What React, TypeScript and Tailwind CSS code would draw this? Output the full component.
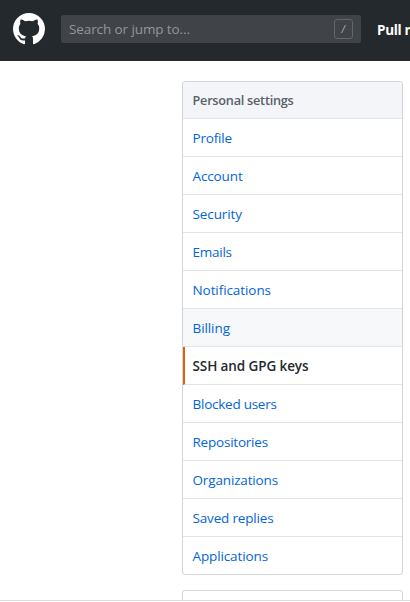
const items = [
  { label: 'Profile', tracking: 'tracking-[-0.2px]' },
  { label: 'Account', tracking: 'tracking-[-0.12px]' },
  { label: 'Security', tracking: 'tracking-[-0.1px]' },
  { label: 'Emails', tracking: 'tracking-[-0.25px]' },
  { label: 'Notifications', tracking: 'tracking-[-0.08px]' },
  { label: 'Billing', tracking: 'tracking-[-0.08px]' },
  { label: 'SSH and GPG keys', tracking: 'tracking-[-0.1px]' },
  { label: 'Blocked users', tracking: 'tracking-[-0.25px]' },
  { label: 'Repositories', tracking: 'tracking-[-0.22px]' },
  { label: 'Organizations', tracking: 'tracking-[-0.15px]' },
  { label: 'Saved replies', tracking: 'tracking-[-0.17px]' },
  { label: 'Applications', tracking: 'tracking-[-0.12px]' },
];

function rowStyle(label: string) {
  if (label === 'SSH and GPG keys') return 'border-l-2 border-l-[#e36209] pl-[7.5px] font-semibold text-[#24292e]';
  if (label === 'Billing') return 'bg-[#f6f8fa] pl-[9.5px] text-[#0366d6]';
  return 'pl-[9.5px] text-[#0366d6]';
}

function Logo() {
  return (
    <svg viewBox="0 0 16 16" className="size-8 shrink-0 fill-white" aria-hidden="true">
      <path d="M8 0C3.58 0 0 3.58 0 8c0 3.54 2.29 6.53 5.47 7.59.4.07.55-.17.55-.38 0-.19-.01-.82-.01-1.49-2.01.37-2.53-.49-2.69-.94-.09-.23-.48-.94-.82-1.13-.28-.15-.68-.52-.01-.53.63-.01 1.08.58 1.23.82.72 1.21 1.87.87 2.33.66.07-.52.28-.87.51-1.07-1.78-.2-3.64-.89-3.64-3.95 0-.87.31-1.59.82-2.15-.08-.2-.36-1.02.08-2.12 0 0 .67-.21 2.2.82.64-.18 1.32-.27 2-.27.68 0 1.36.09 2 .27 1.53-1.04 2.2-.82 2.2-.82.44 1.1.16 1.92.08 2.12.51.56.82 1.27.82 2.15 0 3.07-1.87 3.75-3.65 3.95.29.25.54.73.54 1.48 0 1.07-.01 1.93-.01 2.2 0 .21.15.46.55.38A8.013 8.013 0 0016 8c0-4.42-3.58-8-8-8z" />
    </svg>
  );
}

export default function App() {
  return (
    <div className="flex h-[602px] w-[410px] flex-col overflow-hidden bg-white font-['Open_Sans','Noto_Sans',sans-serif] text-[13.5px]">
      <header className="flex h-[61px] shrink-0 items-center bg-[#24292e] pb-[3px] pl-[13px]">
        <Logo />
        <div className="ml-4 flex h-7 w-[300px] shrink-0 items-center rounded-[3px] bg-[#404448] pr-2 pl-2">
          <span className="flex-1 whitespace-nowrap tracking-[-0.1px] text-[#93979a]">Search or jump to...</span>
          <svg viewBox="0 0 19 20" className="h-5 w-[19px]" fill="none" aria-hidden="true">
            <rect x="0.5" y="0.5" width="18" height="19" rx="2.5" stroke="#63676a" />
            <path d="M11.5 6 7.5 14" stroke="#a5a8aa" />
          </svg>
        </div>
        <span className="ml-4 whitespace-nowrap pt-0.5 font-bold tracking-[-0.3px] text-white">Pull r</span>
      </header>
      <main className="flex h-[539px] shrink-0 flex-col items-start overflow-hidden pt-5 pl-[182px]">
        <nav className="w-[221px] shrink-0 overflow-hidden rounded-[3px] border border-[#d1d5da]">
          <h3 className="flex h-[37px] items-center border-b border-[#e1e4e8] bg-[#f3f5f8] pt-0.5 pl-[9.5px] text-[12.7px] font-semibold tracking-[-0.24px] text-[#586069]">
            Personal settings
          </h3>
          {items.map(({ label, tracking }) => (
            <a
              key={label}
              className={`flex h-[38px] items-center whitespace-nowrap border-b border-b-[#e1e4e8] pt-0.5 last:h-[37px] last:border-b-0 ${tracking} ${rowStyle(label)}`}
            >
              {label}
            </a>
          ))}
        </nav>
        <div className="mt-[15px] h-10 w-[221px] shrink-0 rounded-[3px] border border-[#d1d5da]" />
      </main>
      <div className="h-px shrink-0 bg-[#dcdcdc]" />
    </div>
  );
}
